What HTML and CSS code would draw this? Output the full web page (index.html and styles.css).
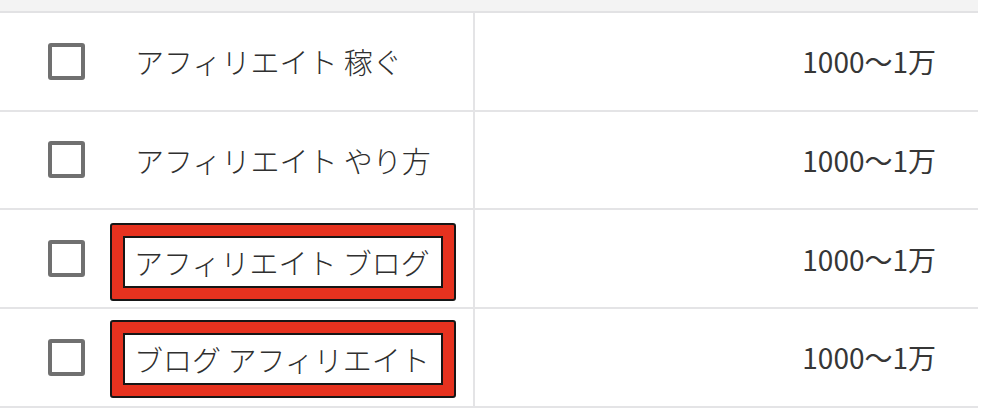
FILE: index.html
```html
<!DOCTYPE html>
<html lang="ja">
<head>
<meta charset="utf-8">
<title>キーワード</title>
<link rel="stylesheet" href="styles.css">
</head>
<body>
<div class="table">
  <div class="table-head"></div>
  <div class="row">
    <div class="cell cell-kw">
      <span class="checkbox"></span>
      <span class="label">アフィリエイト 稼ぐ</span>
    </div>
    <div class="cell cell-vol">1000〜1万</div>
  </div>
  <div class="row">
    <div class="cell cell-kw">
      <span class="checkbox"></span>
      <span class="label">アフィリエイト やり方</span>
    </div>
    <div class="cell cell-vol">1000〜1万</div>
  </div>
  <div class="row">
    <div class="cell cell-kw">
      <span class="checkbox"></span>
      <span class="label mark mark-low"><span class="mark-inner">アフィリエイト ブログ</span></span>
    </div>
    <div class="cell cell-vol">1000〜1万</div>
  </div>
  <div class="row">
    <div class="cell cell-kw">
      <span class="checkbox"></span>
      <span class="label mark mark-mid"><span class="mark-inner">ブログ アフィリエイト</span></span>
    </div>
    <div class="cell cell-vol">1000〜1万</div>
  </div>
</div>
</body>
</html>
```
FILE: styles.css
```css
* { box-sizing: border-box; }

html, body {
  margin: 0;
  padding: 0;
  background: #ffffff;
}

body {
  font-family: "Noto Sans CJK JP", "Noto Sans", sans-serif;
  color: #2f2f2f;
  width: 981px;
  height: 417px;
  overflow: hidden;
}

.table {
  width: 978px;
}

.table-head {
  height: 13px;
  background: #f3f3f3;
  border-bottom: 2px solid #e2e2e4;
}

.row {
  display: grid;
  grid-template-columns: 475px 1fr;
  height: 98.67px;
  border-bottom: 2px solid #e4e4e6;
}

.cell {
  display: flex;
  align-items: center;
}

.cell-kw {
  border-right: 2px solid #e4e4e6;
  padding-left: 48px;
}

.checkbox {
  flex: none;
  width: 37px;
  height: 37px;
  border: 4px solid #707070;
  border-radius: 3px;
  background: #fff;
}

.label {
  margin-left: 50px;
  font-size: 29px;
  font-weight: 300;
  line-height: 40px;
  white-space: nowrap;
}

.mark {
  margin-left: 25px;
  border: 2px solid #161616;
  border-radius: 3px;
  background: #e6321f;
  padding: 11px;
}

.mark-low {
  margin-top: 6px;
}

.mark-mid {
  margin-top: 3px;
}

.mark-inner {
  display: block;
  border: 2px solid #161616;
  background: #ffffff;
  line-height: 48px;
  padding: 0 11px 0 9px;
}

.cell-vol {
  justify-content: flex-end;
  padding-right: 42px;
  font-size: 28px;
  line-height: 40px;
  color: #363636;
}
```
